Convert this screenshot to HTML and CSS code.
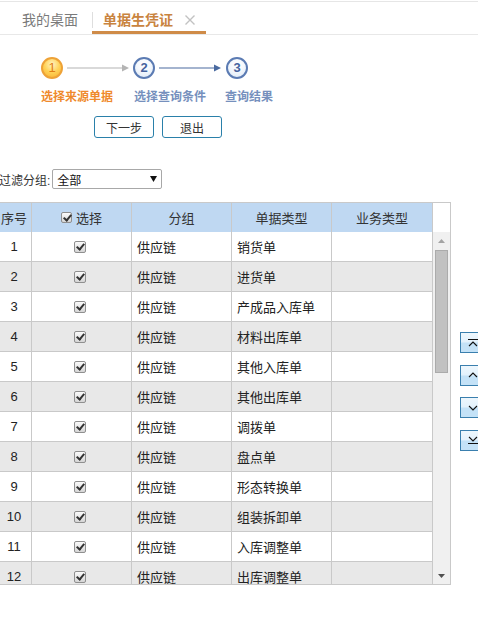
FILE: index.html
```html
<!DOCTYPE html>
<html lang="zh-CN">
<head>
<meta charset="utf-8">
<title>单据生凭证</title>
<link rel="stylesheet" href="styles.css">
</head>
<body>
<div class="tabs">
  <div class="tab">我的桌面</div>
  <div class="tab active">
    <span>单据生凭证</span>
    <svg class="close" width="10" height="10" viewBox="0 0 10 10"><path d="M0.5 0.5L9.5 9.5M9.5 0.5L0.5 9.5" stroke="#c2c2c2" stroke-width="1.4" fill="none"/></svg>
  </div>
</div>

<div class="wizard">
  <div class="steps">
    <span class="circle current">1</span>
    <svg class="arrow" width="62" height="10" viewBox="0 0 62 10"><path d="M0 5H56" stroke="#b4b4b4" stroke-width="1.2"/><path d="M55 1.5L62 5L55 8.5Z" fill="#b4b4b4"/></svg>
    <span class="circle">2</span>
    <svg class="arrow next" width="62" height="10" viewBox="0 0 62 10"><path d="M0 5H56" stroke="#4a6aa0" stroke-width="1.2"/><path d="M55 1.5L62 5L55 8.5Z" fill="#4a6aa0"/></svg>
    <span class="circle">3</span>
  </div>
  <div class="labels">
    <span class="label current">选择来源单据</span>
    <span class="label second">选择查询条件</span>
    <span class="label third">查询结果</span>
  </div>
  <div class="actions">
    <button class="btn">下一步</button>
    <button class="btn">退出</button>
  </div>
</div>

<div class="main">
  <div class="filter">
    <span>过滤分组:</span>
    <div class="select">
      <span>全部</span>
      <svg width="7" height="6" viewBox="0 0 7 6"><path d="M0 0H7L3.5 6Z" fill="#111"/></svg>
    </div>
  </div>

  <div class="body-row">
    <div class="grid">
      <div class="head">
        <div class="cols">
          <div class="cell hc">序号</div>
          <div class="cell hc"><span class="chk small"></span>选择</div>
          <div class="cell hc">分组</div>
          <div class="cell hc">单据类型</div>
          <div class="cell hc">业务类型</div>
        </div>
        <div class="head-fill"></div>
      </div>
      <div class="body">
        <div class="viewport">
          <div class="cols row"><div class="cell num">1</div><div class="cell ck"><span class="chk"></span></div><div class="cell">供应链</div><div class="cell">销货单</div><div class="cell"></div></div>
          <div class="cols row"><div class="cell num">2</div><div class="cell ck"><span class="chk"></span></div><div class="cell">供应链</div><div class="cell">进货单</div><div class="cell"></div></div>
          <div class="cols row"><div class="cell num">3</div><div class="cell ck"><span class="chk"></span></div><div class="cell">供应链</div><div class="cell">产成品入库单</div><div class="cell"></div></div>
          <div class="cols row"><div class="cell num">4</div><div class="cell ck"><span class="chk"></span></div><div class="cell">供应链</div><div class="cell">材料出库单</div><div class="cell"></div></div>
          <div class="cols row"><div class="cell num">5</div><div class="cell ck"><span class="chk"></span></div><div class="cell">供应链</div><div class="cell">其他入库单</div><div class="cell"></div></div>
          <div class="cols row"><div class="cell num">6</div><div class="cell ck"><span class="chk"></span></div><div class="cell">供应链</div><div class="cell">其他出库单</div><div class="cell"></div></div>
          <div class="cols row"><div class="cell num">7</div><div class="cell ck"><span class="chk"></span></div><div class="cell">供应链</div><div class="cell">调拨单</div><div class="cell"></div></div>
          <div class="cols row"><div class="cell num">8</div><div class="cell ck"><span class="chk"></span></div><div class="cell">供应链</div><div class="cell">盘点单</div><div class="cell"></div></div>
          <div class="cols row"><div class="cell num">9</div><div class="cell ck"><span class="chk"></span></div><div class="cell">供应链</div><div class="cell">形态转换单</div><div class="cell"></div></div>
          <div class="cols row"><div class="cell num">10</div><div class="cell ck"><span class="chk"></span></div><div class="cell">供应链</div><div class="cell">组装拆卸单</div><div class="cell"></div></div>
          <div class="cols row"><div class="cell num">11</div><div class="cell ck"><span class="chk"></span></div><div class="cell">供应链</div><div class="cell">入库调整单</div><div class="cell"></div></div>
          <div class="cols row"><div class="cell num">12</div><div class="cell ck"><span class="chk"></span></div><div class="cell">供应链</div><div class="cell">出库调整单</div><div class="cell"></div></div>
        </div>
        <div class="vscroll">
          <div class="sb-btn"><svg width="7" height="4" viewBox="0 0 7 4"><path d="M3.5 0L7 4H0Z" fill="#a3a3a3"/></svg></div>
          <div class="thumb"></div>
          <div class="sb-space"></div>
          <div class="sb-btn"><svg width="7" height="4" viewBox="0 0 7 4"><path d="M0 0H7L3.5 4Z" fill="#505050"/></svg></div>
        </div>
      </div>
    </div>

    <div class="side">
      <div class="mv"><svg width="10" height="8" viewBox="0 0 10 8"><path d="M0 0.5H10M1 7L5 3L9 7" stroke="#111" stroke-width="1.1" fill="none"/></svg></div>
      <div class="mv"><svg width="10" height="8" viewBox="0 0 10 8"><path d="M1 6L5 2L9 6" stroke="#111" stroke-width="1.1" fill="none"/></svg></div>
      <div class="mv"><svg width="10" height="8" viewBox="0 0 10 8"><path d="M1 2L5 6L9 2" stroke="#111" stroke-width="1.1" fill="none"/></svg></div>
      <div class="mv"><svg width="10" height="8" viewBox="0 0 10 8"><path d="M1 1L5 5L9 1M0 7.5H10" stroke="#111" stroke-width="1.1" fill="none"/></svg></div>
    </div>
  </div>
</div>
</body>
</html>
```

FILE: styles.css
```css
html, body {
  overflow: hidden;
}
body {
  margin: 0;
  background: #fff;
  font-family: "Liberation Sans", "Noto Sans CJK SC", sans-serif;
  font-size: 12px;
  color: #333;
}

/* tabs */
.tabs {
  display: flex;
  height: 32px;
  margin-top: 1px;
  border-top: 1px solid #e6e6e6;
  border-bottom: 1px solid #e8e8e8;
}
.tab {
  position: relative;
  box-sizing: border-box;
  height: 32px;
  padding: 8px 14px 0 22px;
  line-height: 20px;
  font-size: 14px;
  color: #7a7a7a;
  border-bottom: 3px solid transparent;
}
.tab.active {
  display: flex;
  align-items: flex-start;
  padding: 8px 11px 0 11px;
  color: #c9843f;
  font-weight: bold;
  border-bottom-color: #cf8b48;
}
.tab.active::before {
  content: "";
  position: absolute;
  left: 0;
  top: 10px;
  width: 1px;
  height: 16px;
  background: #dedede;
}
.close {
  margin: 5px 0 0 12px;
}

/* wizard */
.steps {
  display: flex;
  align-items: center;
  height: 22px;
  margin-top: 22px;
  padding-left: 41px;
}
.circle {
  box-sizing: border-box;
  width: 22px;
  height: 22px;
  border-radius: 50%;
  border: 2px solid #5b7bb3;
  background: radial-gradient(circle at 50% 30%, #ffffff 0%, #f4f8fd 45%, #dce8f6 100%);
  color: #46639e;
  font-weight: bold;
  font-size: 13px;
  line-height: 18px;
  text-align: center;
}
.circle.current {
  border-color: #eea237;
  background: radial-gradient(circle at 50% 30%, #fff4c4 0%, #ffd257 50%, #f7b02f 100%);
  color: #e17d14;
  font-weight: normal;
}
.arrow {
  margin: 0 4px;
}
.arrow.next {
  margin-right: 5px;
}

.labels {
  display: flex;
  margin-top: 10px;
  padding-left: 41px;
  line-height: 16px;
  font-size: 12px;
  font-weight: bold;
  color: #7690bd;
}
.label {
  white-space: nowrap;
}
.label.current {
  color: #ef8a2d;
}
.label.second {
  margin-left: 21px;
}
.label.third {
  margin-left: 19px;
}

.actions {
  display: flex;
  gap: 8px;
  margin-top: 11px;
  padding-left: 94px;
}
.btn {
  box-sizing: border-box;
  width: 60px;
  height: 22px;
  padding: 0;
  border: 1px solid #2a80aa;
  border-radius: 3px;
  background: #fff;
  font-family: inherit;
  font-size: 12px;
  color: #333;
}

/* filter */
.main {
  margin-left: -3px;
  margin-top: 31px;
}
.filter {
  display: flex;
  align-items: center;
  height: 20px;
  padding-left: 2px;
  font-size: 12px;
  color: #333;
}
.select {
  box-sizing: border-box;
  display: flex;
  align-items: center;
  justify-content: space-between;
  width: 110px;
  height: 20px;
  margin-left: 2px;
  padding: 0 4px 0 4px;
  border: 1px solid #a8a8a8;
  border-radius: 2px;
  font-size: 12px;
  color: #111;
}

/* grid */
.body-row {
  display: flex;
  margin-top: 13px;
}
.grid {
  flex: none;
  box-sizing: border-box;
  width: 454px;
  border-top: 1px solid #c9c9c9;
  border-right: 1px solid #c9c9c9;
  border-bottom: 1px solid #c9c9c9;
}
.head {
  display: flex;
  height: 29px;
}
.head-fill {
  flex: 1;
  background: #fff;
}
.cols {
  display: grid;
  grid-template-columns: 35px 100px 100px 100px 101px;
  width: 436px;
}
.cell {
  box-sizing: border-box;
  display: flex;
  align-items: center;
  padding-left: 5px;
  border-right: 1px solid #c9c9c9;
  font-size: 13px;
  color: #222;
  white-space: nowrap;
  overflow: hidden;
}
.hc {
  justify-content: center;
  padding-left: 0;
  background: #bfd8f2;
  color: #333;
}
.body {
  display: flex;
  height: 352px;
}
.viewport {
  width: 436px;
  overflow: hidden;
}
.row {
  box-sizing: border-box;
  height: 30px;
  border-bottom: 1px solid #c9c9c9;
  background: #fff;
}
.row:nth-child(even) {
  background: #e8e8e8;
}
.num {
  justify-content: center;
  padding-left: 0;
}
.ck {
  justify-content: center;
  padding: 0 4px 0 0;
}
.chk {
  position: relative;
  box-sizing: border-box;
  width: 12px;
  height: 12px;
  border: 1px solid #8f8f8f;
  border-radius: 2px;
  background: linear-gradient(#fbfbfb, #d5d5d5);
}
.chk::after {
  content: "";
  position: absolute;
  left: 3px;
  top: 0px;
  width: 3px;
  height: 6px;
  border: solid #333;
  border-width: 0 2px 2px 0;
  transform: rotate(40deg);
}
.chk.small {
  width: 11px;
  height: 11px;
  margin-right: 4px;
}

/* scrollbar */
.vscroll {
  display: flex;
  flex-direction: column;
  width: 17px;
  background: #f0f0f0;
}
.sb-btn {
  display: flex;
  align-items: center;
  justify-content: center;
  height: 17px;
}
.thumb {
  box-sizing: border-box;
  height: 123px;
  margin: 1px 2px 0 2px;
  background: #c1c1c1;
  border: 1px solid #ababab;
}
.sb-space {
  flex: 1;
}

/* side move buttons */
.side {
  display: flex;
  flex-direction: column;
  gap: 11.5px;
  margin-left: 9px;
  padding-top: 130px;
}
.mv {
  box-sizing: border-box;
  display: flex;
  align-items: center;
  justify-content: center;
  width: 26px;
  height: 21px;
  border: 1px solid #3a7fae;
  background: linear-gradient(#eef7fd 0%, #e4f2fc 45%, #c4e2f7 55%, #c4e2f7 100%);
}
```
